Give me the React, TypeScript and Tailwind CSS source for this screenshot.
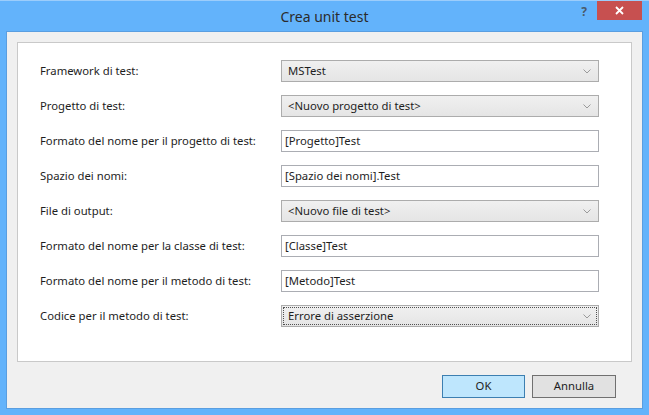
import React from 'react';

type Row = { label: string; value: string; kind: 'combo' | 'text'; focused?: boolean };

const rows: Row[] = [
  { label: 'Framework di test:', value: 'MSTest', kind: 'combo' },
  { label: 'Progetto di test:', value: '<Nuovo progetto di test>', kind: 'combo' },
  { label: 'Formato del nome per il progetto di test:', value: '[Progetto]Test', kind: 'text' },
  { label: 'Spazio dei nomi:', value: '[Spazio dei nomi].Test', kind: 'text' },
  { label: 'File di output:', value: '<Nuovo file di test>', kind: 'combo' },
  { label: 'Formato del nome per la classe di test:', value: '[Classe]Test', kind: 'text' },
  { label: 'Formato del nome per il metodo di test:', value: '[Metodo]Test', kind: 'text' },
  { label: 'Codice per il metodo di test:', value: 'Errore di asserzione', kind: 'combo', focused: true },
];

const Chevron = () => (
  <svg width="8" height="5" viewBox="0 0 8 5" className="shrink-0">
    <path d="M0.5 0.5 L4 4 L7.5 0.5" fill="none" stroke="#9a9a9a" strokeWidth="1" />
  </svg>
);

const Field = ({ row }: { row: Row }) => {
  if (row.kind === 'text') {
    return (
      <div className="w-[318px] h-[22px] border border-[#abadb3] bg-white flex items-center pl-[3px] text-[11.3px] text-[#1e1e1e]">
        {row.value}
      </div>
    );
  }
  return (
    <div className="w-[318px] h-[22px] border border-[#acacac] bg-gradient-to-b from-[#f0f0f0] to-[#e5e5e5] p-[1px] flex">
      <div
        className={
          'flex-1 flex items-center justify-between pl-[4px] pr-[5px] text-[11.3px] text-[#1e1e1e] ' +
          (row.focused ? 'border border-dotted border-[#505050]' : 'border border-transparent')
        }
      >
        <span>{row.value}</span>
        <Chevron />
      </div>
    </div>
  );
};

const App: React.FC = () => {
  return (
    <div
      className="w-[649px] h-[415px] bg-[#63b3fb] border-t border-[#9ccdfb] flex flex-col overflow-hidden"
      style={{ fontFamily: '"Noto Sans", "Open Sans", sans-serif' }}
    >
      {/* title bar */}
      <div className="h-[30px] grid grid-cols-[1fr_auto_1fr]">
        <div />
        <div className="pt-[5px] text-[14px] text-[#2b2b2b]">Crea unit test</div>
        <div className="flex justify-end items-start">
          <span className="mt-[5px] mr-[10px] text-[12px] font-bold text-[#4a5a6a] leading-none">?</span>
          <button className="w-[45px] h-[19px] bg-[#c75050] flex items-center justify-center mr-[7px]">
            <svg width="9" height="9" viewBox="0 0 9 9">
              <path d="M1 1 L8 8 M8 1 L1 8" stroke="#ffffff" strokeWidth="1.8" />
            </svg>
          </button>
        </div>
      </div>

      {/* client area */}
      <div className="mx-[6px] mb-[6px] flex-1 border border-[#5a9ee0] bg-[#f0f0f0] flex flex-col px-[10px] pt-[10px]">
        <div className="h-[320px] border border-[#c9c9c9] bg-white pl-[22px] pt-[17px] flex flex-col gap-[13px]">
          {rows.map((r) => (
            <div key={r.label} className="flex items-center h-[22px]">
              <div className="w-[241px] text-[11.3px] text-[#1e1e1e]">{r.label}</div>
              <Field row={r} />
            </div>
          ))}
        </div>
        <div className="flex justify-end gap-[7px] mt-[13px] pr-[16px]">
          <button className="w-[83px] h-[23px] border border-[#3c7fb1] bg-[#bee6fd] text-[11.3px] text-[#1e1e1e]">
            OK
          </button>
          <button className="w-[84px] h-[23px] border border-[#707070] bg-[#e1e1e1] text-[11.3px] text-[#1e1e1e]">
            Annulla
          </button>
        </div>
      </div>
    </div>
  );
};

export default App;
